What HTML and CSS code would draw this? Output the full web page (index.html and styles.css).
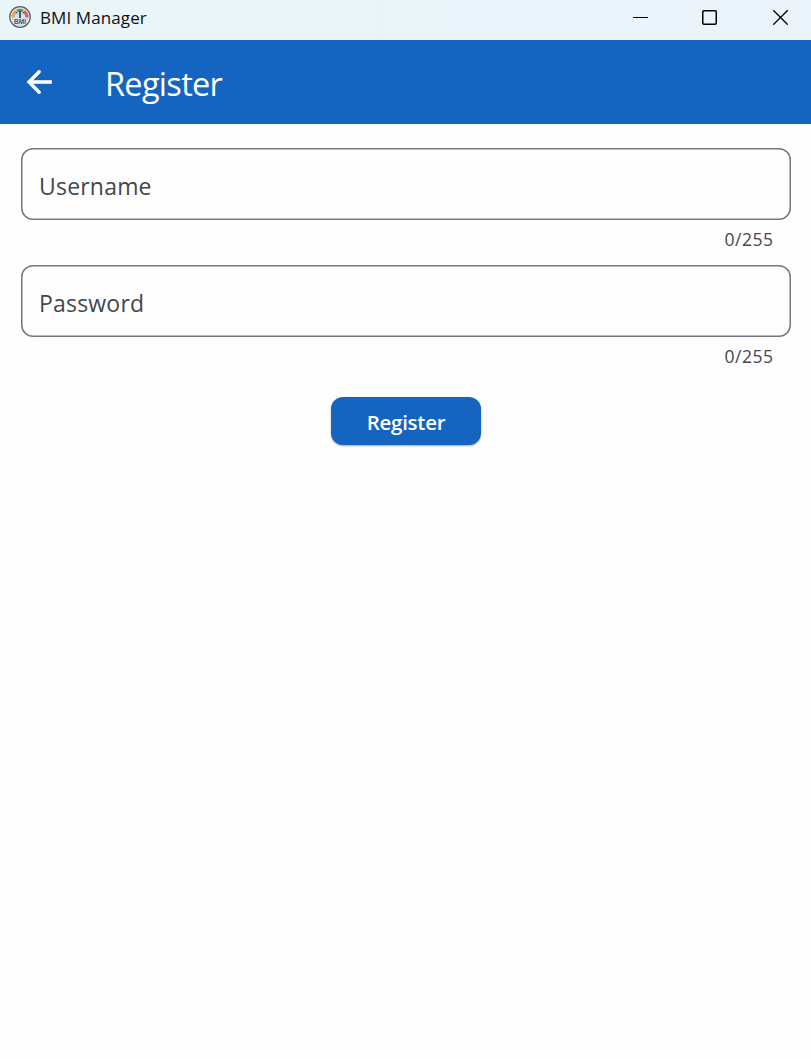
FILE: index.html
```html
<!DOCTYPE html>
<html lang="en">
<head>
<meta charset="utf-8">
<title>BMI Manager</title>
<link rel="stylesheet" href="styles.css">
</head>
<body>
<div class="titlebar">
  <svg class="logo" width="24" height="24" viewBox="0 0 24 24">
    <circle cx="12" cy="12" r="10.3" fill="#d9e0ea" stroke="#566272" stroke-width="1.2"/>
    <g fill="none" stroke-width="3">
      <path d="M5 12.5A7 7 0 0 1 8 6.5" stroke="#f0a045"/>
      <path d="M9 6A7 7 0 0 1 15 6" stroke="#5ba03c"/>
      <path d="M16 6.5A7 7 0 0 1 19 12.5" stroke="#f0525c"/>
    </g>
    <path d="M12 6V13" stroke="#26374f" stroke-width="1.6"/>
    <path d="M8 6.5L9.2 8.5M16 6.5L14.8 8.5" stroke="#324158"/>
    <text class="logo-text" x="12" y="19" text-anchor="middle">BMI</text>
  </svg>
  <span class="window-title">BMI Manager</span>
  <div class="controls">
    <svg width="16" height="16" viewBox="0 0 16 16"><path d="M1 8.5H16" stroke="#000" fill="none"/></svg>
    <svg width="16" height="16" viewBox="0 0 16 16"><rect x=".75" y="1.75" width="13.5" height="13.5" rx="1.2" stroke="#000" stroke-width="1.5" fill="none"/></svg>
    <svg width="16" height="16" viewBox="0 0 16 16"><path d="M1.3 1.3L15.7 15.7M15.7 1.3L1.3 15.7" stroke="#000" stroke-width="1.3" fill="none"/></svg>
  </div>
</div>
<header class="appbar">
  <svg class="back" width="36" height="36" viewBox="0 0 36 36"><path d="M30.8 18H8" fill="none" stroke="#fff" stroke-width="3.6"/><path d="M18.2 7.8L8 18L18.2 28.2" fill="none" stroke="#fff" stroke-width="3.4" stroke-linecap="round" stroke-linejoin="miter"/></svg>
  <h1 class="heading">Register</h1>
</header>
<main class="form">
  <div class="field"><div class="box"><span class="label">Username</span></div><div class="counter">0/255</div></div>
  <div class="field"><div class="box"><span class="label">Password</span></div><div class="counter">0/255</div></div>
  <button class="submit">Register</button>
</main>
</body>
</html>
```
FILE: styles.css
```css
* { box-sizing: border-box; }
body { margin: 0; height: 1059px; background: #fefefe; font-family: "Open Sans", "Noto Sans", sans-serif; overflow: hidden; }
.titlebar { height: 40px; padding: 0 23px 6px 8px; display: flex; align-items: center; background: linear-gradient(90deg, #e9f5f7 0%, #e9f5f6 35%, #ebf4fa 55%, #ebf4fa 100%); }
.logo { margin-right: 8px; }
.logo-text { font: 700 6.5px "Liberation Sans", sans-serif; fill: #4a5870; }
.window-title { margin-top: 1px; font-size: 17px; line-height: 24px; letter-spacing: 0.1px; color: #111; }
.controls { margin-left: auto; display: flex; gap: 54px; }
.controls svg { display: block; }
.appbar { height: 84px; display: flex; align-items: center; padding-left: 21px; background: #1565c0; color: #fff; }
.heading { margin: 4px 0 0 48px; font-size: 32.5px; font-weight: 400; line-height: 44px; letter-spacing: -0.7px; }
.form { padding: 24px 20px 0 21px; display: flex; flex-direction: column; align-items: center; }
.field { width: 100%; height: 117px; }
.box { height: 72px; padding: 4px 18px 0; box-shadow: inset 0 0 0 1.5px #74777f; border-radius: 12px; display: flex; align-items: center; }
.label { font-size: 23px; font-weight: 400; line-height: 32px; color: #43474e; letter-spacing: 0.2px; }
.counter { padding: 7px 17.5px 0 0; font-size: 17.5px; line-height: 24px; text-align: right; color: #43474e; letter-spacing: 0.5px; }
.submit { width: 150px; height: 48px; margin-top: 15px; padding: 1px 0 0; border: 0; border-radius: 12px; background: #1565c0; color: #fff; font: 600 20.5px/28px "Open Sans", "Noto Sans", sans-serif; letter-spacing: -0.25px; box-shadow: 0 1px 2px rgba(0,0,0,.35); }
```
